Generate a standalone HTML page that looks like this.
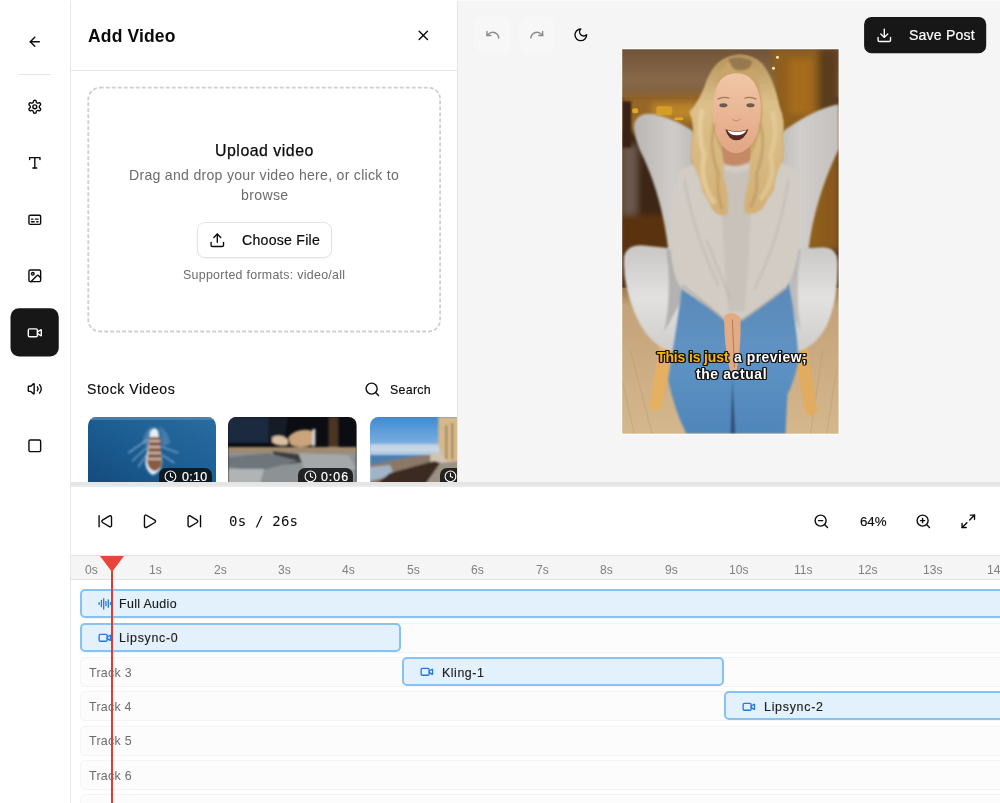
<!DOCTYPE html>
<html lang="en">
<head>
<meta charset="utf-8">
<title>Add Video</title>
<style>
*{box-sizing:border-box;margin:0;padding:0}
html,body{width:1000px;height:803px;overflow:hidden;background:#fff}
body{font-family:"Liberation Sans",sans-serif;color:#0a0a0a;position:relative}
.t{will-change:transform}
svg.ic{position:absolute;width:17px;height:17px;fill:none;stroke:#0a0a0a;stroke-width:2;stroke-linecap:round;stroke-linejoin:round;overflow:visible}
.t{position:absolute;white-space:nowrap;line-height:1}
#sidebar{position:absolute;left:0;top:0;width:71px;height:803px;background:#fff;border-right:1px solid #e6e6e6}
#sidebar .div{position:absolute;left:18.5px;top:73.5px;width:32px;height:1px;background:#e5e5e5}
#panel{position:absolute;left:71px;top:0;width:387px;height:482px;background:#fff;border-right:1px solid #e5e5e5;overflow:hidden}
#panel .hdr{position:absolute;left:0;top:0;width:386px;height:70.5px;border-bottom:1px solid #e8e8e8}
#choose{position:absolute;left:125.5px;top:222.3px;width:135.5px;height:35.3px;border:1px solid #e3e3e3;border-radius:8px;background:#fff;box-shadow:0 1px 2px rgba(0,0,0,.04)}
.gray{color:#6c6c6c}
.thumb{position:absolute;top:417.2px;height:72px;width:128.6px;border-radius:8.5px;overflow:hidden}
.badge{position:absolute;top:50.4px;height:22px;border-radius:7px;background:rgba(12,12,12,.84)}
#preview{position:absolute;left:458px;top:0;width:542px;height:482px;background:#f5f5f5;overflow:hidden}
#topline{position:absolute;left:0;top:0;width:1000px;height:1px;background:rgba(255,255,255,.6)}
.gbtn{position:absolute;top:17px;width:36px;height:36px;border-radius:8px;background:#f7f7f7}
#video{position:absolute;left:163px;top:48px;width:219px;height:387px;overflow:hidden;background:#fcfdfe}
#video svg{position:absolute;left:0;top:0;width:219px;height:387px}
#hbar{position:absolute;left:71px;top:481.6px;width:929px;height:5px;background:linear-gradient(#e4e4e4,#e6e6e6 60%,#ededed)}
#timeline{position:absolute;left:71px;top:486.5px;width:929px;height:317px;background:#fff;overflow:hidden}
#ruler{position:absolute;left:0;top:68.6px;width:929px;height:24.8px;background:#f5f5f5;border-top:1px solid #e2e2e2;border-bottom:1px solid #e2e2e2}
#ruler .t{top:8.3px;font-size:12.1px;color:#808080}
.track{position:absolute;left:8.5px;width:940px;height:30px;border:1px solid #f4f4f4;border-radius:5px;background:#fcfcfc}
.clip{position:absolute;height:29.4px;border:2px solid #86c2f6;border-radius:5px;background:#e3f1fd}
#ph-line{position:absolute;left:40.1px;top:70px;width:1.7px;height:260px;background:#e5392f}
#ph-tri{position:absolute;left:29.2px;top:69px;width:0;height:0;border-left:12px solid transparent;border-right:12px solid transparent;border-top:16px solid #e8463c}
</style>
</head>
<body>
<div id="sidebar">
<svg class="ic" style="left:26.70px;top:33.60px;width:15.6px;height:15.6px;stroke-width:2.15" viewBox="0 0 24 24"><path d="m12 19-7-7 7-7"/><path d="M19 12H5"/></svg>
<div class="div"></div>
<svg aria-hidden="true" style="position:absolute;left:0;top:300px;width:70px;height:64px" viewBox="0 300 70 64"><rect x="10.5" y="308.25" width="48.25" height="48.25" rx="8.5" fill="#171717"/></svg>
<svg class="ic" style="left:26.70px;top:99.10px;width:15.6px;height:15.6px;stroke-width:2.15" viewBox="0 0 24 24"><path d="M12.22 2h-.44a2 2 0 0 0-2 2v.18a2 2 0 0 1-1 1.73l-.43.25a2 2 0 0 1-2 0l-.15-.08a2 2 0 0 0-2.73.73l-.22.38a2 2 0 0 0 .73 2.73l.15.1a2 2 0 0 1 1 1.72v.51a2 2 0 0 1-1 1.74l-.15.09a2 2 0 0 0-.73 2.73l.22.38a2 2 0 0 0 2.73.73l.15-.08a2 2 0 0 1 2 0l.43.25a2 2 0 0 1 1 1.73V20a2 2 0 0 0 2 2h.44a2 2 0 0 0 2-2v-.18a2 2 0 0 1 1-1.73l.43-.25a2 2 0 0 1 2 0l.15.08a2 2 0 0 0 2.73-.73l.22-.39a2 2 0 0 0-.73-2.73l-.15-.08a2 2 0 0 1-1-1.74v-.5a2 2 0 0 1 1-1.74l.15-.09a2 2 0 0 0 .73-2.73l-.22-.38a2 2 0 0 0-2.73-.73l-.15.08a2 2 0 0 1-2 0l-.43-.25a2 2 0 0 1-1-1.73V4a2 2 0 0 0-2-2z"/><circle cx="12" cy="12" r="3"/></svg>
<svg class="ic" style="left:26.70px;top:155.40px;width:15.6px;height:15.6px;stroke-width:2.15" viewBox="0 0 24 24"><polyline points="4 7 4 4 20 4 20 7"/><line x1="9" x2="15" y1="20" y2="20"/><line x1="12" x2="12" y1="4" y2="20"/></svg>
<svg class="ic" style="left:26.70px;top:211.70px;width:15.6px;height:15.6px;stroke-width:2.15" viewBox="0 0 24 24"><rect width="18" height="14" x="3" y="5" rx="2" ry="2"/><path d="M7 15h4M15 15h2M7 11h2M13 11h4"/></svg>
<svg class="ic" style="left:26.70px;top:268.10px;width:15.6px;height:15.6px;stroke-width:2.15" viewBox="0 0 24 24"><rect width="18" height="18" x="3" y="3" rx="2" ry="2"/><circle cx="9" cy="9" r="2"/><path d="m21 15-3.086-3.086a2 2 0 0 0-2.828 0L6 21"/></svg>
<svg class="ic" style="left:26.70px;top:324.50px;width:15.6px;height:15.6px;stroke:#fff;stroke-width:2.15" viewBox="0 0 24 24"><path d="m16 13 5.223 3.482a.5.5 0 0 0 .777-.416V7.87a.5.5 0 0 0-.752-.432L16 10.5"/><rect x="2" y="6" width="14" height="12" rx="2"/></svg>
<svg class="ic" style="left:26.70px;top:380.80px;width:15.6px;height:15.6px;stroke-width:2.15" viewBox="0 0 24 24"><path d="M11 4.702a.705.705 0 0 0-1.203-.498L6.413 7.587A1.4 1.4 0 0 1 5.416 8H3a1 1 0 0 0-1 1v6a1 1 0 0 0 1 1h2.416a1.4 1.4 0 0 1 .997.413l3.383 3.384A.705.705 0 0 0 11 19.298z"/><path d="M16 9a5 5 0 0 1 0 6"/><path d="M19.364 18.364a9 9 0 0 0 0-12.728"/></svg>
<svg class="ic" style="left:26.70px;top:437.50px;width:15.6px;height:15.6px;stroke-width:2.15" viewBox="0 0 24 24"><rect width="18" height="18" x="3" y="3" rx="2"/></svg>
</div>
<div id="panel">
<div class="hdr"></div>
<div class="t" style="left:16.70px;top:27.60px;font-size:17.5px;letter-spacing:0.150px;font-weight:700">Add Video</div>
<svg class="ic" style="left:344.00px;top:27.00px;width:16.6px;height:16.6px" viewBox="0 0 24 24"><path d="M18 6 6 18"/><path d="m6 6 12 12"/></svg>
<svg aria-hidden="true" style="position:absolute;left:0;top:0;width:386px;height:482px;overflow:visible" viewBox="0 0 386 482"><rect x="17.3" y="87.7" width="351.8" height="243.8" rx="11.5" fill="none" stroke="#cfcfcf" stroke-width="1.8" stroke-dasharray="3.9 2.1"/></svg>
<div class="t" style="left:144.00px;top:143.00px;font-size:15.9px;letter-spacing:0.514px;-webkit-text-stroke:0.25px currentColor">Upload video</div>
<div class="t" style="left:57.95px;top:168.00px;font-size:14.1px;letter-spacing:0.277px;color:#6c6c6c">Drag and drop your video here, or click to</div>
<div class="t" style="left:169.50px;top:188.20px;font-size:14.1px;letter-spacing:0.350px;color:#6c6c6c">browse</div>
<div id="choose"></div>
<svg class="ic" style="left:138.20px;top:231.50px;width:16.6px;height:16.6px" viewBox="0 0 24 24"><path d="M21 15v4a2 2 0 0 1-2 2H5a2 2 0 0 1-2-2v-4"/><polyline points="17 8 12 3 7 8"/><line x1="12" x2="12" y1="3" y2="15"/></svg>
<div class="t" style="left:170.60px;top:232.70px;font-size:14.1px;letter-spacing:0.265px;-webkit-text-stroke:0.2px currentColor">Choose File</div>
<div class="t" style="left:112.25px;top:268.90px;font-size:12.4px;letter-spacing:0.287px;color:#6c6c6c">Supported formats: video/all</div>
<div class="t" style="left:16.30px;top:382.00px;font-size:14.1px;letter-spacing:0.518px;-webkit-text-stroke:0.15px currentColor">Stock Videos</div>
<svg class="ic" style="left:293.10px;top:380.50px;width:16.6px;height:16.6px" viewBox="0 0 24 24"><circle cx="11" cy="11" r="8"/><path d="m21 21-4.3-4.3"/></svg>
<div class="t" style="left:319.30px;top:383.50px;font-size:12.4px;letter-spacing:0.300px;-webkit-text-stroke:0.15px currentColor">Search</div>
<div class="thumb" style="left:16.6px">
<svg viewBox="0 0 128 72" preserveAspectRatio="none" aria-hidden="true" style="position:absolute;left:0;top:0;width:128.6px;height:72px">
<defs><linearGradient id="sea" x1="0" y1="1" x2="1" y2="0"><stop offset="0" stop-color="#134a7c"/><stop offset="0.5" stop-color="#1c5d92"/><stop offset="1" stop-color="#2a6da1"/></linearGradient>
<filter id="tb" x="-20%" y="-20%" width="140%" height="140%"><feGaussianBlur stdDeviation="0.8"/></filter></defs>
<rect width="128" height="72" fill="url(#sea)"/>
<rect width="128" height="3" fill="#5a88b0" opacity=".7"/>
<g filter="url(#tb)">
<path d="M64 8 Q56 14 54 26 L60 30 L62 12 Z" fill="#4f83b2" opacity=".8"/>
<path d="M70 8 Q80 14 82 26 L74 30 L72 12 Z" fill="#4f83b2" opacity=".8"/>
<path d="M60 22 L40 36 M59 30 L44 44 M58 38 L50 50 M74 30 L90 36 M74 38 L86 46" stroke="#7fa6c8" stroke-width="1.6" fill="none" opacity=".8"/>
<path d="M62 14 Q66 8 70 14 L74 46 Q72 56 64 58 Q58 54 57 46Z" fill="#e8eef2"/>
<path d="M61 20 h11 l1.500 28 q-3 6 -8 6 q-5 -2 -6.500 -8z" fill="#8a5a40"/>
<path d="M61 24 h11 M60.500 30 h12 M60 36 h13 M60 42 h13" stroke="#e0d8d0" stroke-width="1.600"/>
</g>
</svg>
<div class="badge" style="left:71.3px;width:53.2px"></div>
</div>
<div class="thumb" style="left:157.2px">
<svg viewBox="0 0 128 72" preserveAspectRatio="none" aria-hidden="true" style="position:absolute;left:0;top:0;width:128.6px;height:72px">
<rect width="128" height="72" fill="#0b0d12"/>
<g filter="url(#tb)">
<path d="M0 0 h56 v26 h-56z" fill="#1f2c40"/>
<path d="M40 0 h20 l-4 26 h-16z" fill="#131a26"/>
<path d="M0 30 h128 v42 h-128z" fill="#8d9294"/>
<path d="M0 30 h128 v6 h-128z" fill="#a08a70"/>
<path d="M44 34 L110 42 L50 48Z" fill="#3a3c40"/>
<path d="M0 40 l40 -4 l30 8 l-40 10 l-30 -4z" fill="#6e767c"/>
<path d="M70 36 l50 2 l8 14 l-50 6z" fill="#a4a8a8"/>
<path d="M0 52 l36 0 l-6 20 l-30 0z" fill="#b0b4b4"/>
<path d="M60 20 Q70 10 84 14 Q88 22 84 28 Q72 32 62 28Z" fill="#c9a47c"/>
<path d="M44 20 Q52 16 60 22 L60 28 Q50 30 44 26Z" fill="#d8c0a0"/>
<path d="M84 12 l3 0 l0 16 l-3 2z" fill="#d8d8d8"/>
<path d="M100 0 h10 v30 h-10z" fill="#4a3420"/>
</g>
</svg>
<div class="badge" style="left:70.300px;width:54.700px"></div>
</div>
<div class="thumb" style="left:298.800px">
<svg viewBox="0 0 128 72" preserveAspectRatio="none" aria-hidden="true" style="position:absolute;left:0;top:0;width:128.600px;height:72px">
<defs><linearGradient id="sky" x1="0" y1="0" x2="0" y2="1"><stop offset="0" stop-color="#3f8bd0"/><stop offset="0.400" stop-color="#7fb0e0"/><stop offset="0.560" stop-color="#c6d6e6"/><stop offset="1" stop-color="#c6d6e6"/></linearGradient></defs>
<rect width="128" height="72" fill="url(#sky)"/>
<g filter="url(#tb)">
<path d="M0 27 h70 v8 h-70z" fill="#d4dde6" opacity=".8"/>
<path d="M0 38 h60 v10 h-60z" fill="#4d7fae"/>
<path d="M0 48 L30 42 L70 36 L90 40 L90 72 L0 72Z" fill="#8c7866"/>
<path d="M0 50 l20 -2 l4 10 l-24 6z" fill="#a0b4c8"/>
<path d="M60 36 h30 v10 h-30z" fill="#d0c4b0"/>
<path d="M68 0 L90 0 L90 44 L76 44 L68 30Z" fill="#d6b98a"/>
<path d="M76 8 v34 M82 6 v36" stroke="#8a6a48" stroke-width="1.500"/>
<path d="M0 72 L20 56 L64 44 L70 46 L52 72Z" fill="#3b2b22"/>
<path d="M52 72 L70 46 L90 44 L90 72Z" fill="#9c9284"/>
</g>
</svg>
<div class="badge" style="left:70px;width:54px"></div>
</div>

<svg class="ic" style="left:92.55px;top:469.65px;width:12.9px;height:12.9px;stroke:#fff" viewBox="0 0 24 24"><circle cx="12" cy="12" r="10"/><polyline points="12 6 12 12 16 14"/></svg>
<div class="t" style="left:111.10px;top:471.00px;font-size:12.4px;letter-spacing:0.350px;-webkit-text-stroke:0.2px currentColor;color:#fff">0:10</div>
<svg class="ic" style="left:233.15px;top:469.65px;width:12.9px;height:12.9px;stroke:#fff" viewBox="0 0 24 24"><circle cx="12" cy="12" r="10"/><polyline points="12 6 12 12 16 14"/></svg>
<div class="t" style="left:250.20px;top:471.00px;font-size:12.4px;letter-spacing:0.983px;-webkit-text-stroke:0.2px currentColor;color:#fff">0:06</div>
<svg class="ic" style="left:372.95px;top:469.65px;width:12.9px;height:12.9px;stroke:#fff" viewBox="0 0 24 24"><circle cx="12" cy="12" r="10"/><polyline points="12 6 12 12 16 14"/></svg>
</div>
<div id="preview">
<div class="gbtn" style="left:17px"></div><div class="gbtn" style="left:61.3px"></div>
<svg class="ic" style="left:26.80px;top:27.40px;width:15.6px;height:15.6px;stroke:#8a8a8a;stroke-width:2.15" viewBox="0 0 24 24"><path d="M3 7v6h6"/><path d="M21 17a9 9 0 0 0-9-9 9 9 0 0 0-6 2.3L3 13"/></svg>
<svg class="ic" style="left:71.00px;top:27.40px;width:15.6px;height:15.6px;stroke:#8a8a8a;stroke-width:2.15" viewBox="0 0 24 24"><path d="M21 7v6h-6"/><path d="M3 17a9 9 0 0 1 9-9 9 9 0 0 1 6 2.3l3 2.7"/></svg>
<svg class="ic" style="left:115.40px;top:27.40px;width:15.6px;height:15.6px;stroke-width:2.15" viewBox="0 0 24 24"><path d="M12 3a6 6 0 0 0 9 9 9 9 0 1 1-9-9Z"/></svg>
<svg aria-hidden="true" style="position:absolute;left:400px;top:10px;width:140px;height:50px" viewBox="858 10 140 50"><rect x="864.1" y="16.9" width="122.1" height="36.3" rx="7.5" fill="#171717"/></svg>
<svg class="ic" style="left:418.10px;top:27.10px;width:16.6px;height:16.6px;stroke:#fff" viewBox="0 0 24 24"><path d="M21 15v4a2 2 0 0 1-2 2H5a2 2 0 0 1-2-2v-4"/><polyline points="7 10 12 15 17 10"/><line x1="12" x2="12" y1="15" y2="3"/></svg>
<div class="t" style="left:450.60px;top:28.40px;font-size:14.1px;letter-spacing:0.169px;-webkit-text-stroke:0.2px currentColor;color:#fff">Save Post</div>
<div id="video">
<svg viewBox="0 0 219 387" preserveAspectRatio="none" aria-hidden="true">
<defs>
  <filter id="b1" x="-10%" y="-10%" width="120%" height="120%"><feGaussianBlur stdDeviation="1.2"/></filter>
  <filter id="b2" x="-20%" y="-20%" width="140%" height="140%"><feGaussianBlur stdDeviation="3"/></filter>
  <filter id="b3" x="-30%" y="-30%" width="160%" height="160%"><feGaussianBlur stdDeviation="6"/></filter>
  <filter id="b0" x="-10%" y="-10%" width="120%" height="120%"><feGaussianBlur stdDeviation="0.6"/></filter>
  <linearGradient id="gceil" x1="0" y1="0" x2="0" y2="1"><stop offset="0" stop-color="#6f5135"/><stop offset="0.65" stop-color="#876849"/><stop offset="1" stop-color="#80603e"/></linearGradient>
  <linearGradient id="gfloor" x1="0" y1="0" x2="0" y2="1"><stop offset="0" stop-color="#9a7448"/><stop offset="0.12" stop-color="#c4a27a"/><stop offset="1" stop-color="#d5b88e"/></linearGradient>
  <linearGradient id="gchairL" x1="0" y1="0" x2="1" y2="0"><stop offset="0" stop-color="#b9b6b3"/><stop offset="0.5" stop-color="#cfccc9"/><stop offset="1" stop-color="#b0adaa"/></linearGradient>
  <linearGradient id="gchairR" x1="0" y1="0" x2="1" y2="0"><stop offset="0" stop-color="#b4b1ae"/><stop offset="0.5" stop-color="#d0cdca"/><stop offset="1" stop-color="#c4c1be"/></linearGradient>
  <linearGradient id="gseat" x1="0" y1="0" x2="0" y2="1"><stop offset="0" stop-color="#c9c7c5"/><stop offset="0.5" stop-color="#e2e1e0"/><stop offset="1" stop-color="#cfcdcc"/></linearGradient>
  <linearGradient id="gjeans" x1="0" y1="0" x2="0" y2="1"><stop offset="0" stop-color="#5a88b6"/><stop offset="0.5" stop-color="#5f93c4"/><stop offset="1" stop-color="#4f86bb"/></linearGradient>
  <linearGradient id="ghair" x1="0" y1="0" x2="0" y2="1"><stop offset="0" stop-color="#b8945c"/><stop offset="0.3" stop-color="#dcc08a"/><stop offset="1" stop-color="#d2b076"/></linearGradient>
  <linearGradient id="gface" x1="0" y1="0" x2="0" y2="1"><stop offset="0" stop-color="#f0c6a6"/><stop offset="1" stop-color="#e2a684"/></linearGradient>
</defs>
<g transform="translate(1.2 1.2) scale(1.00185 1.00156)">
<!-- background -->
<rect x="-4" y="-4" width="224" height="392" fill="#5a3a1e"/>
<rect x="-4" y="-4" width="224" height="52" fill="url(#gceil)"/>
<g filter="url(#b2)">
  <path d="M0 46 L90 44 L90 80 L0 82Z" fill="#966626"/>
  <path d="M30 54 h44 v16 h-44z" fill="#b9842c"/>
  <path d="M150 0 L216 0 L216 200 L160 200Z" fill="#8f5e1e"/>
  <path d="M196 0 h20 v64 h-20z" fill="#5a3c1a"/>
  <path d="M166 10 h24 v55 h-24z" fill="#a56c1c"/>
  <path d="M0 82 h60 v120 h-60z" fill="#3c2514"/>
  <path d="M0 96 h15 v70 h-15z" fill="#6a584c"/>
  <path d="M0 165 h50 v40 h-50z" fill="#5a3010"/>
  <path d="M200 100 h16 v100 h-16z" fill="#8a5a1e"/>
</g>
<path d="M0 52 h9 v46 h-9z" fill="#3a2414" filter="url(#b1)"/>
<g filter="url(#b0)" fill="#e0a824"><rect x="10" y="59" width="6" height="5" rx="2"/><rect x="34" y="57" width="16" height="9" rx="3" opacity=".7"/><rect x="52" y="68" width="9" height="3" rx="1.5"/></g>
<circle cx="155" cy="8" r="1.5" fill="#ffe9b0"/><circle cx="151" cy="19" r="1.5" fill="#ffe9b0"/>
<!-- floor -->
<rect x="-4" y="238" width="224" height="150" fill="url(#gfloor)"/>
<g opacity=".35" stroke="#b89468" stroke-width="1.2" fill="none" filter="url(#b0)"><path d="M8 300 L30 384"/><path d="M0 330 L12 384"/><path d="M200 300 L188 384"/><path d="M214 320 L204 384"/></g>
<!-- chair legs -->
<g filter="url(#b0)">
  <path d="M38 290 L52 294 L39 358 Q33 364 27 358Z" fill="#e6b064"/>
  <path d="M170 296 L184 292 L195 362 Q189 368 183 363Z" fill="#e2ac60"/>
</g>
<!-- chair -->
<g filter="url(#b1)">
  <path d="M12 74 Q16 62 32 65 Q60 72 76 86 L90 200 L46 200 Q40 150 22 110 Q10 86 12 74Z" fill="url(#gchairL)"/>
  <path d="M216 55 Q190 60 158 84 L140 200 L186 200 Q192 150 216 100Z" fill="url(#gchairR)"/>
  <path d="M2 206 Q6 194 22 196 L60 200 L160 200 L196 198 Q214 196 215 212 Q216 250 204 276 Q192 298 174 302 L44 300 Q24 292 12 262 Q0 232 2 206Z" fill="url(#gseat)"/>
  <path d="M44 200 L64 200 L60 250 L42 282 Q50 240 44 200Z" fill="#a9a7a6" opacity=".8"/>
  <path d="M156 200 L178 200 Q172 240 178 282 L164 250Z" fill="#b5b3b2" opacity=".8"/>
</g>
<!-- jeans -->
<g filter="url(#b1)">
  <path d="M60 236 Q110 222 166 234 Q174 270 176 312 Q170 336 165 344 L163 384 L64 384 Q52 360 46 330 Q54 280 60 236Z" fill="url(#gjeans)"/>
  <path d="M110 330 L113 384 L108 384Z" fill="#2f4f78"/>
</g>
<!-- hair back -->
<g filter="url(#b1)">
  <path d="M114 6 Q94 8 86 30 Q78 52 68 62 Q72 74 70 92 Q68 112 72 128 L156 128 Q162 108 160 88 Q162 70 156 56 Q150 28 138 14 Q128 5 114 6Z" fill="#c9a468"/>
</g>
<!-- neck -->
<path d="M100 90 h28 v30 q-14 8 -28 0z" fill="#c48a66" filter="url(#b0)"/>
<!-- sweater -->
<g filter="url(#b1)">
  <path d="M96 112 Q70 112 56 122 Q48 150 48 196 Q50 228 60 240 Q84 256 104 272 L120 270 Q146 252 164 238 Q174 220 176 196 Q180 150 174 122 Q160 110 132 110 Q114 122 96 112Z" fill="#d2ccc5"/>
  <path d="M98 118 Q114 128 130 118 Q128 200 122 262 L106 262 Q100 200 98 118Z" fill="#c8c2bb"/>
  <path d="M60 236 Q84 254 104 272 L120 270 Q146 252 164 238" stroke="#b4aea8" stroke-width="2" fill="none"/>
  <path d="M62 130 Q70 180 96 236 M166 130 Q158 186 132 240 M84 190 Q96 220 108 250" stroke="#bdb7b0" stroke-width="2.5" fill="none" opacity=".6"/>
</g>
<!-- hands -->
<g filter="url(#b0)">
  <path d="M102 266 Q110 260 118 268 Q119 300 114 322 Q110 326 107 318 Q101 292 102 266Z" fill="#e3ab84"/>
  <path d="M110 270 L112 318" stroke="#b07a58" stroke-width="1"/>
</g>
<!-- face -->
<g filter="url(#b0)">
  <path d="M114 24 Q134 24 138 52 Q140 78 130 94 Q122 104 114 104 Q104 104 97 92 Q88 76 90 52 Q94 24 114 24Z" fill="url(#gface)"/>
  <path d="M103 80 Q114 84 126 80 Q122 91 114 91 Q106 91 103 80Z" fill="#5a2a22"/>
  <path d="M105 81 Q114 84 124 81 Q122 86 114 86 Q107 86 105 81Z" fill="#fff"/>
  <ellipse cx="101" cy="56" rx="4" ry="2" fill="#6a5a50"/><ellipse cx="128" cy="56" rx="4" ry="2" fill="#6a5a50"/>
  <path d="M95 50 q6 -3 12 -1" stroke="#9a7a58" stroke-width="1.2" fill="none"/><path d="M122 49 q6 -2 12 1" stroke="#9a7a58" stroke-width="1.2" fill="none"/>
  <path d="M110 70 q4 3 8 0" stroke="#cf9272" stroke-width="1.2" fill="none"/>
</g>
<!-- hair front strands -->
<g filter="url(#b1)">
  <path d="M116 7 Q100 13 95 32 Q91 50 90 66 Q91 84 97 98 Q103 110 101 126 Q108 146 105 165 Q98 169 90 160 Q86 150 80 142 Q78 128 72 118 Q66 104 70 92 Q74 76 67 63 Q78 52 85 30 Q95 8 116 7Z" fill="url(#ghair)"/>
  <path d="M112 7 Q130 11 136 33 Q140 50 140 66 Q138 84 132 98 Q125 112 127 128 Q121 148 122 163 Q132 167 141 158 Q146 148 152 140 Q152 128 158 116 Q163 104 160 88 Q163 72 157 58 Q151 28 139 14 Q127 4 112 7Z" fill="url(#ghair)"/>
  <path d="M106 10 Q116 5 130 12 Q128 22 118 21 Q110 22 106 10Z" fill="#8a6e48" opacity=".8"/>
  <path d="M80 60 Q74 84 82 106 Q76 130 92 154" stroke="#ecd9ab" stroke-width="5" fill="none" opacity=".55"/>
  <path d="M150 62 Q156 84 148 106 Q154 130 138 150" stroke="#e8d2a0" stroke-width="5" fill="none" opacity=".55"/>
  <path d="M92 74 Q86 100 96 124 Q94 144 100 160" stroke="#b08a50" stroke-width="3" fill="none" opacity=".45"/>
  <path d="M138 74 Q144 100 134 124 Q136 144 128 158" stroke="#b08a50" stroke-width="3" fill="none" opacity=".45"/>
</g>
</g>
<path fill-rule="evenodd" fill="#fcfdfe" d="M-5 -5H224V392H-5Z M1.2 1.2H217.6V385.8H1.2Z"/>
</svg>

<div class="t" style="left:35.95px;top:302.90px;font-size:13.9px;letter-spacing:-0.095px;font-weight:700;color:#f8b900;text-shadow:-1.1px -1.1px 0 #161616,1.1px -1.1px 0 #161616,-1.1px 1.1px 0 #161616,1.1px 1.1px 0 #161616,0 1.4px 0 #161616,0 -1.4px 0 #161616,1.4px 0 0 #161616,-1.4px 0 0 #161616,0 0 1.5px rgba(0,0,0,.6)">This is just</div>
<div class="t" style="left:112.90px;top:302.90px;font-size:13.9px;letter-spacing:0.533px;font-weight:700;color:#fff;text-shadow:-1.1px -1.1px 0 #161616,1.1px -1.1px 0 #161616,-1.1px 1.1px 0 #161616,1.1px 1.1px 0 #161616,0 1.4px 0 #161616,0 -1.4px 0 #161616,1.4px 0 0 #161616,-1.4px 0 0 #161616,0 0 1.5px rgba(0,0,0,.6)">a preview;</div>
<div class="t" style="left:74.95px;top:319.80px;font-size:13.9px;letter-spacing:0.628px;font-weight:700;color:#fff;text-shadow:-1.1px -1.1px 0 #161616,1.1px -1.1px 0 #161616,-1.1px 1.1px 0 #161616,1.1px 1.1px 0 #161616,0 1.4px 0 #161616,0 -1.4px 0 #161616,1.4px 0 0 #161616,-1.4px 0 0 #161616,0 0 1.5px rgba(0,0,0,.6)">the actual</div>
</div></div>
<div id="topline"></div><div id="hbar"></div>
<div id="timeline">
<svg class="ic" style="left:26.20px;top:26.00px;width:16.6px;height:16.6px" viewBox="0 0 24 24"><path d="M17.971 4.285A2 2 0 0 1 21 6v12a2 2 0 0 1-3.029 1.715l-9.997-5.998a2 2 0 0 1-.003-3.432z"/><path d="M3 20V4"/></svg>
<svg class="ic" style="left:70.40px;top:26.00px;width:16.6px;height:16.6px" viewBox="0 0 24 24"><path d="M5 5a2 2 0 0 1 3.008-1.728l11.997 6.998a2 2 0 0 1 .003 3.458l-12 7A2 2 0 0 1 5 19z"/></svg>
<svg class="ic" style="left:114.70px;top:26.00px;width:16.6px;height:16.6px" viewBox="0 0 24 24"><path d="M21 4v16"/><path d="M6.029 4.285A2 2 0 0 0 3 6v12a2 2 0 0 0 3.029 1.715l9.997-5.998a2 2 0 0 0 .003-3.432z"/></svg>
<div class="t" style="left:158.00px;top:27.10px;font-size:14.1px;letter-spacing:0.171px;font-family:'DejaVu Sans Mono',monospace">0s / 26s</div>
<svg class="ic" style="left:741.50px;top:26.00px;width:16.6px;height:16.6px" viewBox="0 0 24 24"><circle cx="11" cy="11" r="8"/><line x1="21" x2="16.65" y1="21" y2="16.65"/><line x1="8" x2="14" y1="11" y2="11"/></svg>
<div class="t" style="left:788.50px;top:28.10px;font-size:13.3px;letter-spacing:-0.075px;-webkit-text-stroke:0.15px currentColor">64%</div>
<svg class="ic" style="left:844.40px;top:26.00px;width:16.6px;height:16.6px" viewBox="0 0 24 24"><circle cx="11" cy="11" r="8"/><line x1="21" x2="16.65" y1="21" y2="16.65"/><line x1="11" x2="11" y1="8" y2="14"/><line x1="8" x2="14" y1="11" y2="11"/></svg>
<svg class="ic" style="left:889.00px;top:26.00px;width:16.6px;height:16.6px" viewBox="0 0 24 24"><polyline points="15 3 21 3 21 9"/><polyline points="9 21 3 21 3 15"/><line x1="21" x2="14" y1="3" y2="10"/><line x1="3" x2="10" y1="21" y2="14"/></svg>
<div id="ruler">
<div class="t" style="left:13.6px">0s</div>
<div class="t" style="left:78.1px">1s</div>
<div class="t" style="left:142.5px">2s</div>
<div class="t" style="left:207.0px">3s</div>
<div class="t" style="left:271.4px">4s</div>
<div class="t" style="left:335.9px">5s</div>
<div class="t" style="left:400.3px">6s</div>
<div class="t" style="left:464.8px">7s</div>
<div class="t" style="left:529.2px">8s</div>
<div class="t" style="left:593.7px">9s</div>
<div class="t" style="left:658.1px">10s</div>
<div class="t" style="left:722.6px">11s</div>
<div class="t" style="left:787.0px">12s</div>
<div class="t" style="left:851.5px">13s</div>
<div class="t" style="left:915.9px">14s</div>
</div>
<div class="track" style="top:102.5px"></div>
<div class="track" style="top:136.5px"></div>
<div class="track" style="top:170.5px"></div>
<div class="track" style="top:204.5px"></div>
<div class="track" style="top:239.5px"></div>
<div class="track" style="top:273.5px"></div>
<div class="track" style="top:307.5px"></div>
<div class="t" style="left:18.05px;top:180.20px;font-size:12.4px;letter-spacing:0.317px;color:#6c6c6c">Track 3</div>
<div class="t" style="left:18.05px;top:214.50px;font-size:12.4px;letter-spacing:0.275px;color:#6c6c6c">Track 4</div>
<div class="t" style="left:18.05px;top:248.80px;font-size:12.4px;letter-spacing:0.317px;color:#6c6c6c">Track 5</div>
<div class="t" style="left:18.05px;top:283.10px;font-size:12.4px;letter-spacing:0.317px;color:#6c6c6c">Track 6</div>
<div class="clip" style="left:8.9px;top:102.5px;width:930.1px"></div>
<svg class="ic" style="left:26.75px;top:110.15px;width:13.7px;height:13.7px;stroke:#2378da;stroke-width:2.3" viewBox="0 0 24 24"><path d="M2 10v3"/><path d="M6 6v11"/><path d="M10 3v18"/><path d="M14 8v7"/><path d="M18 5v13"/><path d="M22 10v3"/></svg>
<div class="t" style="left:48.40px;top:111.50px;font-size:12.4px;letter-spacing:0.356px;-webkit-text-stroke:0.15px currentColor;color:#1c1c1c">Full Audio</div>
<div class="clip" style="left:8.9px;top:136.5px;width:321.5px"></div>
<svg class="ic" style="left:26.75px;top:144.45px;width:13.7px;height:13.7px;stroke:#2378da;stroke-width:2.3" viewBox="0 0 24 24"><path d="m16 13 5.223 3.482a.5.5 0 0 0 .777-.416V7.87a.5.5 0 0 0-.752-.432L16 10.5"/><rect x="2" y="6" width="14" height="12" rx="2"/></svg>
<div class="t" style="left:48.40px;top:145.80px;font-size:12.4px;letter-spacing:0.713px;-webkit-text-stroke:0.15px currentColor;color:#1c1c1c">Lipsync-0</div>
<div class="clip" style="left:331.3px;top:170.5px;width:321.5px"></div>
<svg class="ic" style="left:349.15px;top:178.75px;width:13.7px;height:13.7px;stroke:#2378da;stroke-width:2.3" viewBox="0 0 24 24"><path d="m16 13 5.223 3.482a.5.5 0 0 0 .777-.416V7.87a.5.5 0 0 0-.752-.432L16 10.5"/><rect x="2" y="6" width="14" height="12" rx="2"/></svg>
<div class="t" style="left:370.80px;top:180.10px;font-size:12.4px;letter-spacing:0.550px;-webkit-text-stroke:0.15px currentColor;color:#1c1c1c">Kling-1</div>
<div class="clip" style="left:653.3px;top:204.5px;width:285.7px"></div>
<svg class="ic" style="left:671.15px;top:213.05px;width:13.7px;height:13.7px;stroke:#2378da;stroke-width:2.3" viewBox="0 0 24 24"><path d="m16 13 5.223 3.482a.5.5 0 0 0 .777-.416V7.87a.5.5 0 0 0-.752-.432L16 10.5"/><rect x="2" y="6" width="14" height="12" rx="2"/></svg>
<div class="t" style="left:692.80px;top:214.40px;font-size:12.4px;letter-spacing:0.737px;-webkit-text-stroke:0.15px currentColor;color:#1c1c1c">Lipsync-2</div>
<div id="ph-line"></div><div id="ph-tri"></div>
</div>
</body>
</html>
